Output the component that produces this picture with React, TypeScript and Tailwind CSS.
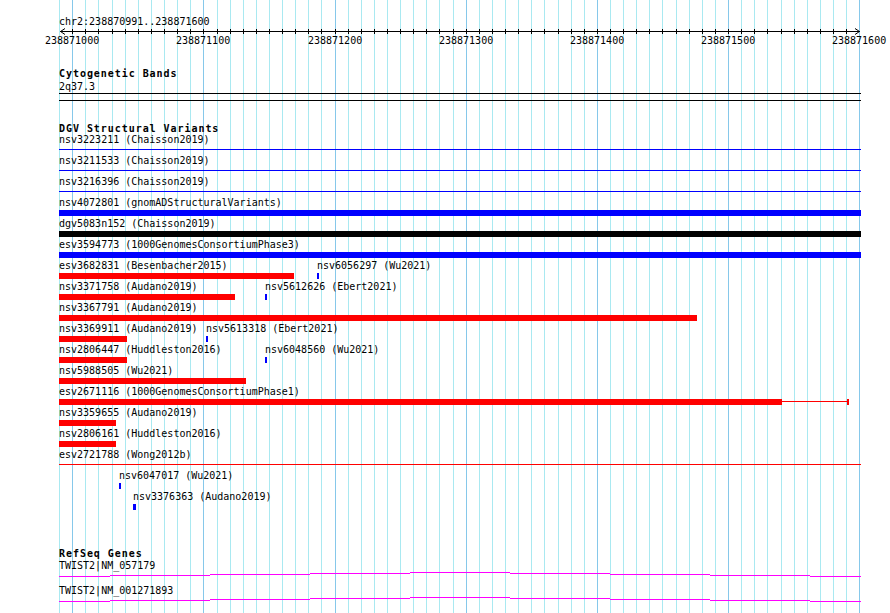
import React from 'react';

// genome view: chr2:238870991..238871600 drawn from x=59 to x=861
const ORIGIN = 59;
const VIEW_W = 802;
const BLUE = '#0000ff';
const RED = '#ff0000';
const BLACK = '#000000';

const gridX = (k: number) => Math.floor(59.6 + 13.117 * k);

type Feature = {
  label: string;
  start: number;
  end: number;
  color: string;
  thin?: boolean;
  tail?: number;
};

const dgvRows: Feature[][] = [
  [{ label: 'nsv3223211 (Chaisson2019)', start: 59, end: 861, color: BLUE, thin: true }],
  [{ label: 'nsv3211533 (Chaisson2019)', start: 59, end: 861, color: BLUE, thin: true }],
  [{ label: 'nsv3216396 (Chaisson2019)', start: 59, end: 861, color: BLUE, thin: true }],
  [{ label: 'nsv4072801 (gnomADStructuralVariants)', start: 59, end: 861, color: BLUE }],
  [{ label: 'dgv5083n152 (Chaisson2019)', start: 59, end: 861, color: BLACK }],
  [{ label: 'esv3594773 (1000GenomesConsortiumPhase3)', start: 59, end: 861, color: BLUE }],
  [
    { label: 'esv3682831 (Besenbacher2015)', start: 59, end: 294, color: RED },
    { label: 'nsv6056297 (Wu2021)', start: 317, end: 319, color: BLUE },
  ],
  [
    { label: 'nsv3371758 (Audano2019)', start: 59, end: 235, color: RED },
    { label: 'nsv5612626 (Ebert2021)', start: 265, end: 267, color: BLUE },
  ],
  [{ label: 'nsv3367791 (Audano2019)', start: 59, end: 697, color: RED }],
  [
    { label: 'nsv3369911 (Audano2019)', start: 59, end: 127, color: RED },
    { label: 'nsv5613318 (Ebert2021)', start: 206, end: 208, color: BLUE },
  ],
  [
    { label: 'nsv2806447 (Huddleston2016)', start: 59, end: 127, color: RED },
    { label: 'nsv6048560 (Wu2021)', start: 265, end: 267, color: BLUE },
  ],
  [{ label: 'nsv5988505 (Wu2021)', start: 59, end: 246, color: RED }],
  [{ label: 'esv2671116 (1000GenomesConsortiumPhase1)', start: 59, end: 782, color: RED, tail: 847 }],
  [{ label: 'nsv3359655 (Audano2019)', start: 59, end: 116, color: RED }],
  [{ label: 'nsv2806161 (Huddleston2016)', start: 59, end: 116, color: RED }],
  [{ label: 'esv2721788 (Wong2012b)', start: 59, end: 861, color: RED, thin: true }],
  [{ label: 'nsv6047017 (Wu2021)', start: 119, end: 121, color: BLUE }],
  [{ label: 'nsv3376363 (Audano2019)', start: 133, end: 136, color: BLUE }],
];

const genes = ['TWIST2|NM_057179', 'TWIST2|NM_001271893'];

// stepped transcript line: [from, to, dy]
const geneSteps: [number, number, number][] = [
  [59, 110, 4],
  [110, 210, 3],
  [210, 310, 2],
  [310, 410, 1],
  [410, 510, 0],
  [510, 610, 1],
  [610, 710, 2],
  [710, 810, 3],
  [810, 861, 4],
];

function Grid() {
  return (
    <svg className="absolute left-0 top-0" width={890} height={613}>
      {Array.from({ length: 62 }).map((_, k) => (
        <rect
          key={k}
          x={gridX(k)}
          y={0}
          width={1}
          height={613}
          fill={k % 10 === 1 ? '#86c8ea' : '#a9e9f1'}
        />
      ))}
    </svg>
  );
}

function Ruler() {
  const majors = Array.from({ length: 7 }).map((_, i) => ({
    k: 1 + i * 10,
    text: String(238871000 + i * 100),
  }));
  return (
    <div className="relative h-[19px] w-[802px]">
      <svg className="absolute left-0 top-0" width={VIEW_W} height={8}>
        <rect x={1} y={3} width={800} height={1} fill={BLACK} />
        {Array.from({ length: 60 }).map((_, i) => (
          <rect key={i} x={gridX(i + 1) - ORIGIN} y={1} width={1} height={5} fill={BLACK} />
        ))}
        <polyline points="6,0.5 1.5,3.5 6,6.5" fill="none" stroke={BLACK} strokeWidth={1} />
        <polyline points="796,0.5 800.5,3.5 796,6.5" fill="none" stroke={BLACK} strokeWidth={1} />
      </svg>
      {majors.map((m) => (
        <span
          key={m.k}
          className="absolute top-[7px] leading-[12px]"
          style={{ left: gridX(m.k) - ORIGIN - 27 }}
        >
          {m.text}
        </span>
      ))}
    </div>
  );
}

function TrackTitle({ children, className }: { children: React.ReactNode; className?: string }) {
  return (
    <div className={`h-[12px] font-bold tracking-[0.95px] leading-[14px] ${className ?? ''}`}>{children}</div>
  );
}

function DgvRow({ feats }: { feats: Feature[] }) {
  return (
    <div className="relative h-[21px] w-[802px]">
      {feats.map((f) => (
        <React.Fragment key={f.label}>
          <span className="absolute top-0 whitespace-pre leading-[12px]" style={{ left: f.start - ORIGIN }}>
            {f.label}
          </span>
          <div
            className={`absolute ${f.thin ? 'top-[15px] h-px' : 'top-[13px] h-[6px]'}`}
            style={{ left: f.start - ORIGIN, width: f.end - f.start, backgroundColor: f.color }}
          />
          {f.tail ? (
            <>
              <div
                className="absolute top-[15px] h-px"
                style={{ left: f.end - ORIGIN, width: f.tail - f.end, backgroundColor: f.color }}
              />
              <div
                className="absolute top-[13px] h-[6px] w-[2px]"
                style={{ left: f.tail - ORIGIN, backgroundColor: f.color }}
              />
            </>
          ) : null}
        </React.Fragment>
      ))}
    </div>
  );
}

function GeneRow({ name }: { name: string }) {
  return (
    <div className="h-[25px] w-[802px]">
      <div className="h-[12px] leading-[12px]">{name}</div>
      <svg width={VIEW_W} height={13} className="block">
        {geneSteps.map(([a, b, dy]) => (
          <rect key={a} x={a - ORIGIN} y={dy} width={b - a} height={1} fill="#ff00ff" />
        ))}
      </svg>
    </div>
  );
}

export default function App() {
  return (
    <div className="relative h-[613px] w-[890px] overflow-hidden bg-white text-[10px] text-black font-['DejaVu_Sans_Mono',monospace]">
      <Grid />
      <div className="relative pl-[59px] pt-[16px]">
        <div className="h-[12px] leading-[12px]">chr2:238870991..238871600</div>
        <Ruler />

        <TrackTitle className="mt-[20px]">Cytogenetic Bands</TrackTitle>
        <div className="mt-px h-[12px] leading-[13px]">2q37.3</div>
        <div className="mt-px h-[8px] w-[802px] border-y border-black" />

        <TrackTitle className="mt-[21px]">DGV Structural Variants</TrackTitle>
        <div>
          {dgvRows.map((r, i) => (
            <DgvRow key={i} feats={r} />
          ))}
        </div>

        <TrackTitle className="mt-[35px]">RefSeq Genes</TrackTitle>
        <div className="mt-px">
          {genes.map((g) => (
            <GeneRow key={g} name={g} />
          ))}
        </div>
      </div>
    </div>
  );
}
